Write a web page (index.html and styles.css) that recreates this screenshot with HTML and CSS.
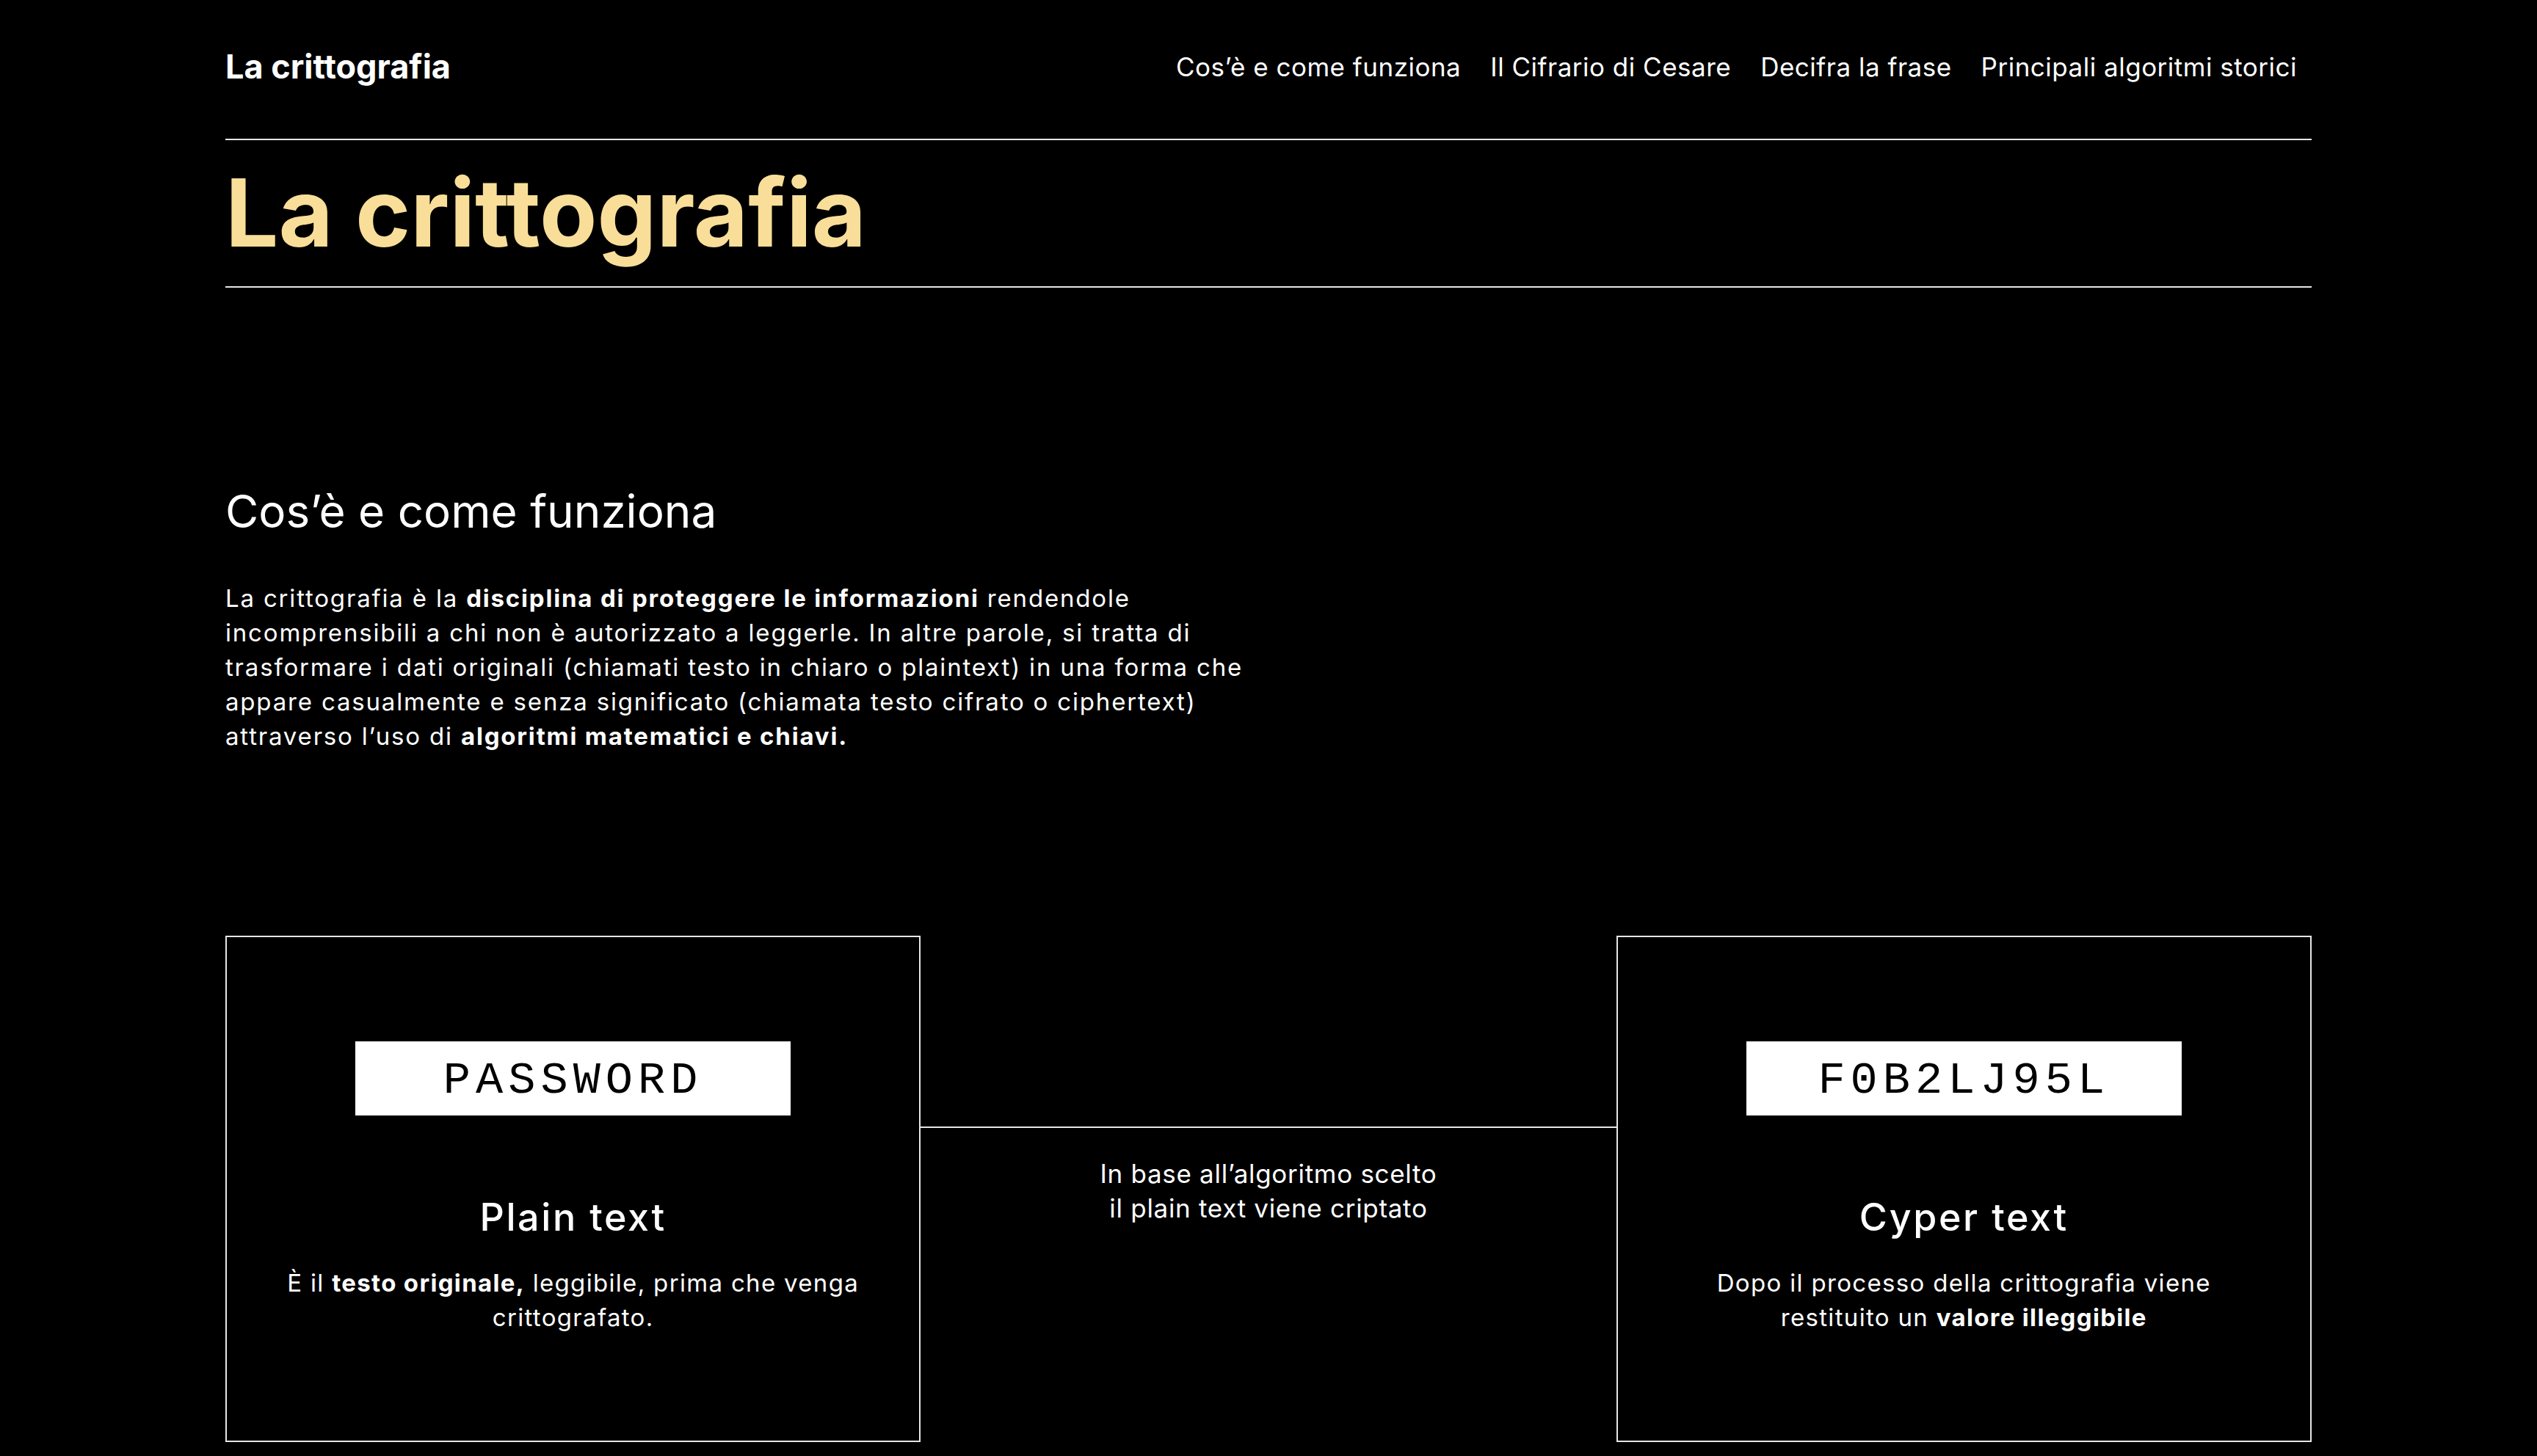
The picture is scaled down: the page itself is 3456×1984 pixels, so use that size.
FILE: index.html
```html
<!DOCTYPE html>
<html lang="it">
<head>
<meta charset="utf-8">
<title>La crittografia</title>
<link rel="stylesheet" href="styles.css">
</head>
<body>
<header class="site-header container">
  <a class="logo" href="#">La crittografia</a>
  <nav class="nav">
    <a href="#cose">Cos’è e come funziona</a>
    <a href="#cesare">Il Cifrario di Cesare</a>
    <a href="#decifra">Decifra la frase</a>
    <a href="#algoritmi">Principali algoritmi storici</a>
  </nav>
</header>

<section class="hero container">
  <h1 class="hero-title">La crittografia</h1>
</section>

<section class="intro container" id="cose">
  <h2 class="section-title">Cos’è e come funziona</h2>
  <p class="lead">La crittografia è la <strong>disciplina di proteggere le informazioni</strong> rendendole incomprensibili a chi non è autorizzato a leggerle. In altre parole, si tratta di trasformare i dati originali (chiamati testo in chiaro o plaintext) in una forma che appare casualmente e senza significato (chiamata testo cifrato o ciphertext) attraverso l’uso di <strong>algoritmi matematici e chiavi.</strong></p>

  <div class="diagram">
    <div class="card">
      <div class="token">PASSWORD</div>
      <h3 class="card-title">Plain text</h3>
      <p class="card-text">È il <strong>testo originale,</strong> leggibile, prima che venga crittografato.</p>
    </div>
    <div class="link">
      <div class="link-line"></div>
      <p class="link-text">In base all’algoritmo scelto<br>il plain text viene criptato</p>
    </div>
    <div class="card">
      <div class="token">F0B2LJ95L</div>
      <h3 class="card-title">Cyper text</h3>
      <p class="card-text">Dopo il processo della crittografia viene restituito un <strong>valore illeggibile</strong></p>
    </div>
  </div>
</section>
</body>
</html>
```

FILE: styles.css
```css
* {
  box-sizing: border-box;
}

body {
  margin: 0;
  background: #000;
  color: #fff;
  font-family: Inter, "Noto Sans", sans-serif;
}

.container {
  max-width: 2842px;
  margin: 0 auto;
}

/* Header */
.site-header {
  display: flex;
  justify-content: space-between;
  align-items: center;
  padding: 64px 0 72px;
  border-bottom: 2px solid #e6e6e6;
}

.logo {
  font-size: 45px;
  font-weight: 700;
  line-height: 1.18;
  color: #fff;
  text-decoration: none;
}

.nav {
  display: flex;
}

.nav a {
  padding: 0 20px;
  font-size: 35px;
  letter-spacing: 0.5px;
  color: #fff;
  text-decoration: none;
}

/* Hero */
.hero {
  padding: 35px 0 36px;
  border-bottom: 2px solid #e6e6e6;
}

.hero-title {
  margin: 0;
  font-size: 128px;
  font-weight: 700;
  line-height: 1;
  color: #f8de98;
}

/* Intro */
.intro {
  padding-top: 266px;
  padding-bottom: 120px;
}

.section-title {
  margin: 0;
  font-size: 62px;
  font-weight: 400;
  line-height: 1.25;
}

.lead {
  margin: 56px 0 0;
  max-width: 1440px;
  font-size: 33px;
  line-height: 47px;
  letter-spacing: 0.055em;
}

strong {
  font-weight: 700;
}

/* Diagram */
.diagram {
  display: grid;
  grid-template-columns: repeat(3, 1fr);
  margin-top: 248px;
}

.card {
  height: 690px;
  padding-top: 142px;
  border: 2px solid #e6e6e6;
  text-align: center;
}

.token {
  display: flex;
  align-items: center;
  justify-content: center;
  width: 593px;
  height: 101px;
  margin: 0 auto;
  padding-top: 6px;
  background: #fff;
  color: #000;
  font-family: "Liberation Mono", monospace;
  font-size: 62px;
  letter-spacing: 7px;
}

.card-title {
  margin: 108px 0 0;
  font-size: 52px;
  font-weight: 500;
  line-height: 1.21;
  letter-spacing: 0.05em;
}

.card-text {
  max-width: 800px;
  margin: 34px auto 0;
  font-size: 33px;
  line-height: 47px;
  letter-spacing: 0.04em;
}

.link {
  padding-top: 260px;
}

.link-line {
  height: 2px;
  background: #e6e6e6;
}

.link-text {
  margin: 39px 0 0;
  text-align: center;
  font-size: 35px;
  line-height: 47px;
  letter-spacing: 0.02em;
}
```
